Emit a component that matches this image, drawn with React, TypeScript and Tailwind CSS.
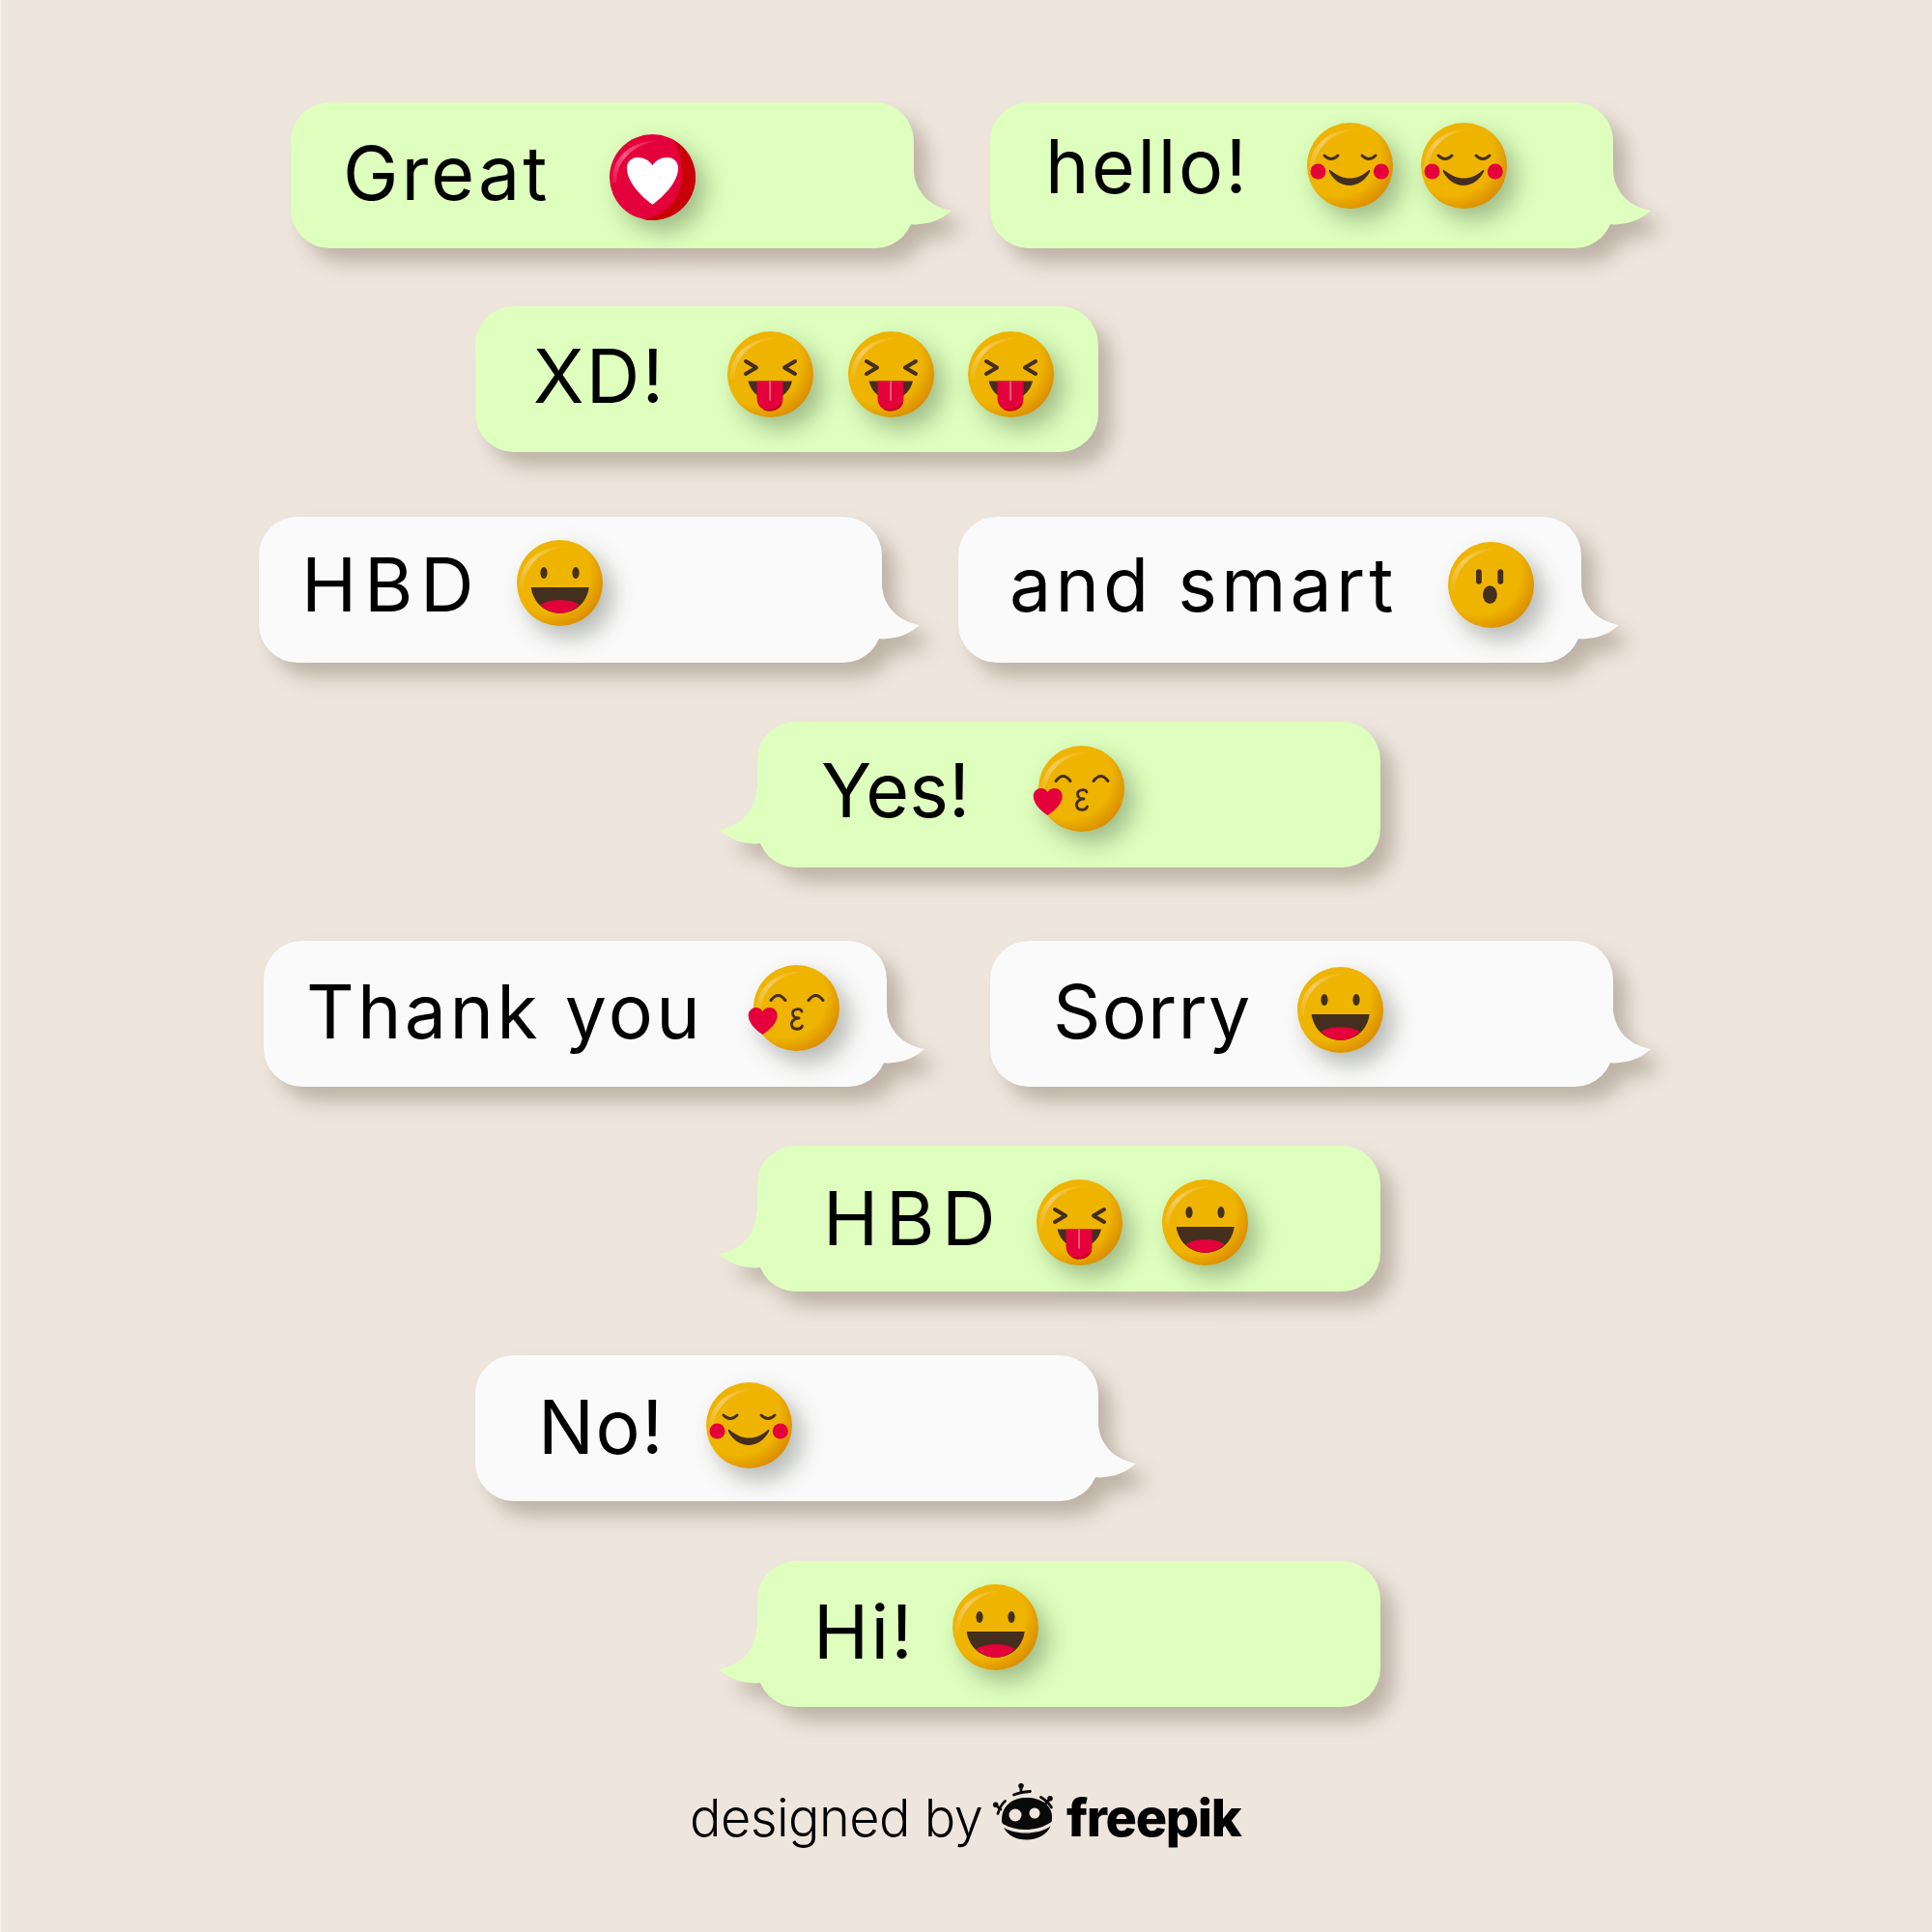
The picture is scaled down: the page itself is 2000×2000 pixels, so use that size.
import React from "react";

const BROWN = "#442E1E";
const RED = "#E4003A";

function Base() {
  return (
    <>
      <defs>
        <radialGradient id="yb" cx="36%" cy="36%" r="72%">
          <stop offset="0.68" stopColor="#EEB400" />
          <stop offset="1" stopColor="#D98800" />
        </radialGradient>
        <linearGradient id="hl" x1="0" y1="1" x2="1" y2="0">
          <stop offset="0" stopColor="#F3C960" stopOpacity="0.15" />
          <stop offset="0.45" stopColor="#F4CC66" stopOpacity="0.95" />
          <stop offset="1" stopColor="#F4CC66" stopOpacity="0" />
        </linearGradient>
      </defs>
      <circle cx="44.5" cy="44.5" r="44.5" fill="url(#yb)" />
      <path d="M3 50C1 24 24 3 58 7C32 6 8 22 7 50Z" fill="url(#hl)" />
    </>
  );
}

function Shell({ children }: { children: React.ReactNode }) {
  return (
    <svg viewBox="0 0 89 89" className="block w-[89px] h-[89px] overflow-visible drop-shadow-[10px_12px_12px_rgba(20,30,10,0.3)]">
      {children}
    </svg>
  );
}

function Smile() {
  return (
    <Shell>
      <Base />
      <path d="M18 34Q25 41 32 34M57 34Q64 41 71 34" fill="none" stroke={BROWN} strokeWidth="3" strokeLinecap="round" />
      <circle cx="11.5" cy="50.5" r="8" fill={RED} />
      <circle cx="76.8" cy="50.5" r="8" fill={RED} />
      <path d="M24 49C31 55 38 57.5 44 57.5C51 57.5 58 55 64 49C65.5 48.5 65.5 50 65 51C60 60 52 65 44 65C36 65 28 60 23 51C22.5 49.5 23 48.5 24 49Z" fill={BROWN} />
    </Shell>
  );
}

function Tongue() {
  return (
    <Shell>
      <Base />
      <path d="M19 31L30 37.5L19 44M70 31L59 37.5L70 44" fill="none" stroke={BROWN} strokeWidth="4" strokeLinecap="round" strokeLinejoin="round" />
      <path d="M21.5 51.5H67C65 60 60 65 55 68H34C28 65 24 60 21.5 51.5Z" fill={BROWN} />
      <path d="M30.5 51.5H57.5V69C57.5 77 52 82.5 44 82.5C36 82.5 30.5 77 30.5 69Z" fill={RED} />
      <path d="M57 73C56 79 51 82.5 44 82.5C41 82.5 38.5 81.7 36.5 80.4C45 80.5 52 78.5 57 73Z" fill="#C4001C" />
      <rect x="43.2" y="51.5" width="1.8" height="20" fill="#F2667F" />
    </Shell>
  );
}

function Laugh() {
  return (
    <Shell>
      <Base />
      <ellipse cx="28" cy="34" rx="3.6" ry="6" fill={BROWN} />
      <ellipse cx="61" cy="34" rx="3.6" ry="6" fill={BROWN} />
      <path d="M14.7 49H74.7C72.5 66 59 75.8 44.7 75.8C30.5 75.8 17 66 14.7 49Z" fill={BROWN} />
      <path d="M24.5 67C30 63.5 37 62.3 44.7 62.3C52.5 62.3 59.5 63.5 64.7 67C59 72.8 52 75.8 44.7 75.8C37 75.8 30 72.8 24.5 67Z" fill={RED} />
    </Shell>
  );
}

function Wow() {
  return (
    <Shell>
      <Base />
      <rect x="29" y="28.3" width="5.8" height="15.4" rx="2.9" fill={BROWN} />
      <rect x="51.4" y="28.3" width="5.8" height="15.4" rx="2.9" fill={BROWN} />
      <ellipse cx="43.4" cy="54.7" rx="7.4" ry="9.4" fill={BROWN} />
    </Shell>
  );
}

function Kiss() {
  return (
    <Shell>
      <Base />
      <path d="M18 36.5Q25.5 26.5 33 36.5M57 36.5Q64.5 26.5 72 36.5" fill="none" stroke={BROWN} strokeWidth="3" strokeLinecap="round" />
      <path d="M50 48C48.500 44.500 40.500 45 40.500 50C40.500 53.500 44 55 47 55C43 55 39 57.500 39.500 62C40.500 67.500 49 67.500 50.500 63" fill="none" stroke={BROWN} strokeWidth="2.8" strokeLinecap="round" strokeLinejoin="round" />
      <path d="M9.5 72C2 67-5.300 60-5.300 52C-5.300 47-1 44 2.500 44C5.500 44 8 45.500 9.500 48C11 45.500 13.500 44 16.500 44C21 44 24.700 47.500 24.700 52C24.700 60 17 67 9.500 72Z" fill={RED} />
    </Shell>
  );
}

function Love() {
  return (
    <Shell>
      <defs>
        <linearGradient id="rh" x1="0" y1="1" x2="1" y2="0">
          <stop offset="0" stopColor="#F4567E" stopOpacity="0.2" />
          <stop offset="0.45" stopColor="#F65A84" stopOpacity="1" />
          <stop offset="1" stopColor="#F65A84" stopOpacity="0" />
        </linearGradient>
      </defs>
      <circle cx="44.5" cy="44.5" r="44.5" fill={RED} />
      <path d="M66 6C78 13 89 27 89 44.5C89 69 69 89 44.5 89C40 89 37 88.5 35 88C60 84 78 62 75 35C74 24 71 14 66 6Z" fill="#C80008" />
      <path d="M3 50C1 24 24 3 58 7C32 6 8 22 7 50Z" fill="url(#rh)" />
      <path d="M44.5 72.8C30 62 18 48 18 35C18 28 23 24 29 24C36 24 41 27 44.5 32C48 27 53 24 60 24C66 24 71 28 71 35C71 48 59 62 44.5 72.8Z" fill="#FFFFFF" />
    </Shell>
  );
}

function Bubble({ white, left, plain, children }: { white?: boolean; left?: boolean; plain?: boolean; children: React.ReactNode }) {
  const fill = white ? "#FAFAFA" : "#DEFFBE";
  return (
    <div className="relative w-[645px] h-[151px] shrink-0 drop-shadow-[14px_15px_10px_rgba(80,60,40,0.3)]">
      {!plain && (
        <svg
          viewBox="0 0 100 90"
          className={left ? "absolute top-[60px] left-[-41px] w-[100px] h-[90px] -scale-x-100" : "absolute top-[60px] right-[-40px] w-[100px] h-[90px]"}
        >
          <path d="M60 9C60 30 75 48 99 52C88 62 72 68 55 66L20 80L20 9Z" fill={fill} />
        </svg>
      )}
      <div className={white ? "relative flex items-start w-full h-full rounded-[40px] bg-[#FAFAFA]" : "relative flex items-start w-full h-full rounded-[40px] bg-[#DEFFBE]"}>
        {children}
      </div>
    </div>
  );
}

const textBase = "font-['Inter',sans-serif] text-[77px] leading-[100px] text-black whitespace-pre";

export default function App() {
  return (
    <div className="w-[2000px] h-[2000px] bg-[#EEE6DD] shadow-[inset_1px_0_0_#F9F6F2] overflow-hidden flex flex-col pt-[106px]">
      <div className="flex gap-[79px] ml-[301px]">
        <Bubble>
          <span className={`${textBase} tracking-[0.04em] ml-[54px] mt-[23px] w-[276px]`}>Great</span>
          <div className="mt-[33px]"><Love /></div>
        </Bubble>
        <Bubble>
          <span className={`${textBase} tracking-[0.033em] ml-[57px] mt-[16px] w-[271px]`}>hello!</span>
          <div className="mt-[21px]"><Smile /></div>
          <div className="mt-[21px] ml-[29px]"><Smile /></div>
        </Bubble>
      </div>

      <div className="flex mt-[60px] ml-[492px]">
        <Bubble plain>
          <span className={`${textBase} tracking-[0.03em] ml-[60px] mt-[22px] w-[201px]`}>XD!</span>
          <div className="mt-[26px]"><Tongue /></div>
          <div className="mt-[26px] ml-[36px]"><Tongue /></div>
          <div className="mt-[26px] ml-[35px]"><Tongue /></div>
        </Bubble>
      </div>

      <div className="flex gap-[79px] mt-[67px] ml-[268px]">
        <Bubble white>
          <span className={`${textBase} tracking-[0.1em] ml-[44px] mt-[20px] w-[223px]`}>HBD</span>
          <div className="mt-[24px]"><Laugh /></div>
        </Bubble>
        <Bubble white>
          <span className={`${textBase} tracking-[0.054em] ml-[53px] mt-[20px] w-[454px]`}>and smart</span>
          <div className="mt-[26px]"><Wow /></div>
        </Bubble>
      </div>

      <div className="flex mt-[61px] ml-[784px]">
        <Bubble left>
          <span className={`${textBase} ml-[66px] mt-[21px] w-[225px]`}>Yes!</span>
          <div className="mt-[25px]"><Kiss /></div>
        </Bubble>
      </div>

      <div className="flex gap-[107px] mt-[76px] ml-[273px]">
        <Bubble white>
          <span className={`${textBase} tracking-[0.043em] ml-[44px] mt-[23px] w-[463px]`}>Thank you</span>
          <div className="mt-[25px]"><Kiss /></div>
        </Bubble>
        <Bubble white>
          <span className={`${textBase} tracking-[0.016em] ml-[65px] mt-[23px] w-[253px]`}>Sorry</span>
          <div className="mt-[27px]"><Laugh /></div>
        </Bubble>
      </div>

      <div className="flex mt-[61px] ml-[784px]">
        <Bubble left>
          <span className={`${textBase} tracking-[0.1em] ml-[68px] mt-[25px] w-[221px]`}>HBD</span>
          <div className="mt-[35px]"><Tongue /></div>
          <div className="mt-[35px] ml-[41px]"><Laugh /></div>
        </Bubble>
      </div>

      <div className="flex mt-[66px] ml-[492px]">
        <Bubble white>
          <span className={`${textBase} tracking-[0.02em] ml-[65px] mt-[24px] w-[174px]`}>No!</span>
          <div className="mt-[28px]"><Smile /></div>
        </Bubble>
      </div>

      <div className="flex mt-[62px] ml-[784px]">
        <Bubble left>
          <span className={`${textBase} tracking-[0.03em] ml-[58px] mt-[23px] w-[144px]`}>Hi!</span>
          <div className="mt-[24px]"><Laugh /></div>
        </Bubble>
      </div>

      <div className="flex items-start mt-[75px] ml-[714px]">
        <span className="font-['Inter',sans-serif] text-[54px] leading-[80px] font-light text-black w-[304px] whitespace-pre tracking-[-0.01em]">designed by</span>
        <svg viewBox="0 0 85 80" className="block w-[85px] h-[80px] shrink-0 mt-[-6px]" aria-hidden="true">
          <path d="M19 48C19 33 30 25 45 25C60 25 71 33 71 45C71 46 71 48 70.500 50C62 56 52 58 44 58C35 58 27 56 20 52C19.500 51 19 50 19 48Z" fill="#0A0A0A" />
          <path d="M21 56C28 60 36 61.500 44 61.500C53 61.500 62 59.500 69.500 54.500C66 63 56 68.500 45 68.500C34 68.500 25 64 21 56Z" fill="#0A0A0A" />
          <circle cx="33" cy="43" r="6.500" fill="#EEE6DD" />
          <circle cx="53" cy="41" r="5.500" fill="#EEE6DD" />
          <circle cx="39" cy="12.700" r="2.800" fill="#0A0A0A" />
          <path d="M39 13V19M31.500 22C36 20 43 19 48.500 18.500" fill="none" stroke="#0A0A0A" strokeWidth="2.800" strokeLinecap="round" />
          <circle cx="12.700" cy="32.300" r="2.800" fill="#0A0A0A" />
          <path d="M13 33L18 37M15 41.500C16.500 36 19 31.500 22.500 28.500" fill="none" stroke="#0A0A0A" strokeWidth="2.800" strokeLinecap="round" />
          <circle cx="69" cy="25.700" r="2.800" fill="#0A0A0A" />
          <path d="M69 26L64.500 31M59.500 24.500C64 27 68 31 70.500 35" fill="none" stroke="#0A0A0A" strokeWidth="2.800" strokeLinecap="round" />
        </svg>
        <span className="font-['Inter',sans-serif] text-[54px] leading-[80px] font-extrabold text-black whitespace-pre tracking-[-0.025em] ml-[1px]">freepik</span>
      </div>
    </div>
  );
}
